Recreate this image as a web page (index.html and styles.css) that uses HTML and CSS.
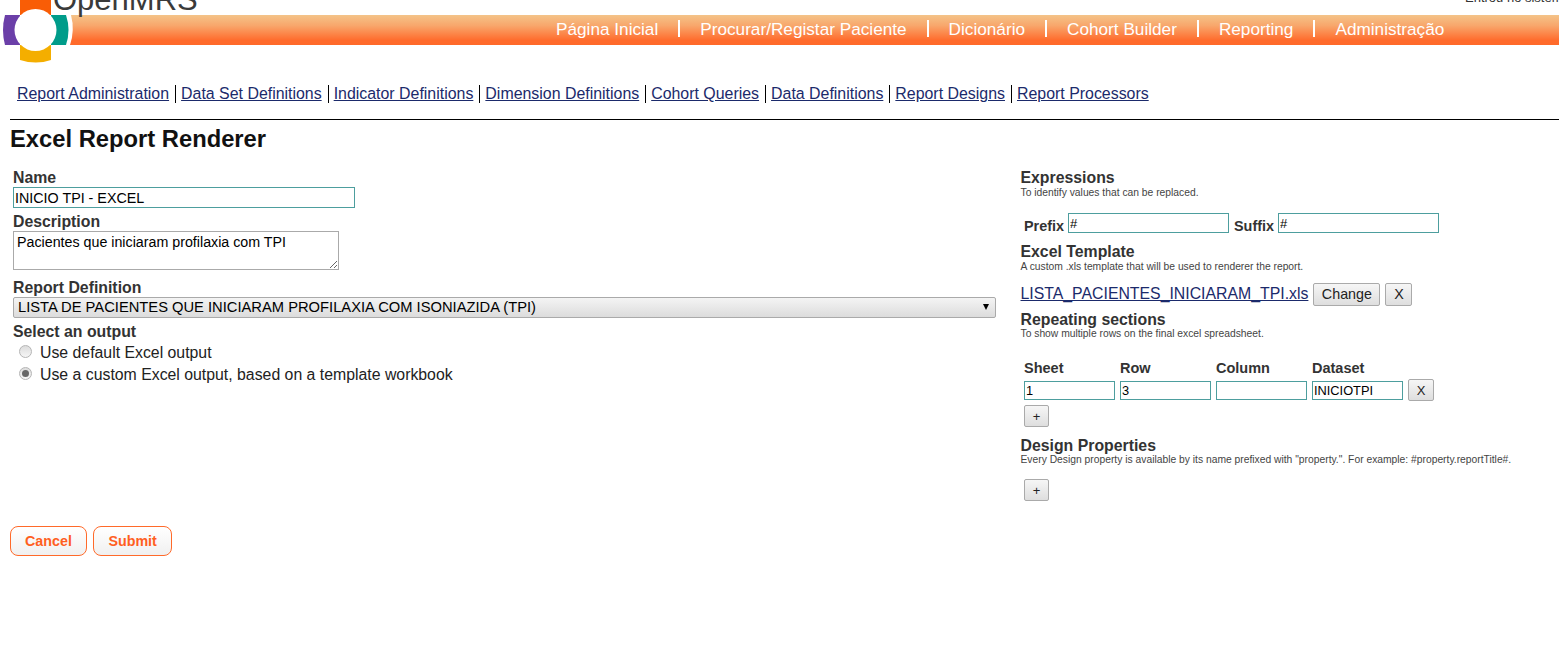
FILE: index.html
```html
<!DOCTYPE html>
<html lang="pt">
<head>
<meta charset="utf-8">
<title>Excel Report Renderer</title>
<link rel="stylesheet" href="styles.css">
</head>
<body>
<header class="top">
  <div class="userline">Entrou no sistema</div>
  <nav class="banner">
    <a>Página Inicial</a><a>Procurar/Registar Paciente</a><a>Dicionário</a><a>Cohort Builder</a><a>Reporting</a><a>Administração</a>
  </nav>
  <div class="brand">OpenMRS</div>
  <svg class="logo" width="80" height="70" viewBox="0 0 80 70" aria-hidden="true">
    <path d="M0 15H71Q75 30 70 45H0Z" fill="#fff"/>
    <path d="M20 0H51V15H20Z" fill="#f95d06"/>
    <path d="M20 45H51V60Q36 65 20 60Z" fill="#f4ae00"/>
    <path d="M5 15H20V45H5Q1 30 5 15Z" fill="#6b3fa8"/>
    <path d="M51 15H66Q71 30 66 45H51Z" fill="#009c8a"/>
    <circle cx="35.5" cy="30" r="21" fill="#fff"/>
  </svg>
</header>

<nav class="subnav">
  <a href="#">Report Administration</a><a href="#">Data Set Definitions</a><a href="#">Indicator Definitions</a><a href="#">Dimension Definitions</a><a href="#">Cohort Queries</a><a href="#">Data Definitions</a><a href="#">Report Designs</a><a href="#">Report Processors</a>
</nav>

<main class="content">
  <h1>Excel Report Renderer</h1>
  <div class="columns">
    <section class="left">
      <label class="lab">Name</label>
      <input class="field name-field" value="INICIO TPI - EXCEL">
      <label class="lab lab-desc">Description</label>
      <textarea class="desc">Pacientes que iniciaram profilaxia com TPI</textarea>
      <label class="lab lab-def">Report Definition</label>
      <div class="select"><span>LISTA DE PACIENTES QUE INICIARAM PROFILAXIA COM ISONIAZIDA (TPI)</span><i class="arrow"></i></div>
      <label class="lab lab-out">Select an output</label>
      <div class="radio-row"><span class="radio"></span>Use default Excel output</div>
      <div class="radio-row"><span class="radio on"></span>Use a custom Excel output, based on a template workbook</div>
    </section>

    <section class="right">
      <div class="head">Expressions</div>
      <div class="hint">To identify values that can be replaced.</div>
      <div class="affix">
        <b>Prefix</b><input class="field small wide" value="#">
        <b>Suffix</b><input class="field small wide" value="#">
      </div>
      <div class="head h-template">Excel Template</div>
      <div class="hint">A custom .xls template that will be used to renderer the report.</div>
      <div class="template">
        <a href="#">LISTA_PACIENTES_INICIARAM_TPI.xls</a>
        <button class="btn btn-change">Change</button>
        <button class="btn btn-x">X</button>
      </div>
      <div class="head h-repeat">Repeating sections</div>
      <div class="hint">To show multiple rows on the final excel spreadsheet.</div>
      <div class="grid">
        <b>Sheet</b><b>Row</b><b>Column</b><b>Dataset</b><span></span>
        <input class="field small" value="1"><input class="field small" value="3"><input class="field small" value=""><input class="field small" value="INICIOTPI"><button class="btn sm">X</button>
      </div>
      <button class="btn sm plus plus-a">+</button>
      <div class="head h-design">Design Properties</div>
      <div class="hint">Every Design property is available by its name prefixed with "property.". For example: #property.reportTitle#.</div>
      <button class="btn sm plus plus-b">+</button>
    </section>
  </div>
  <div class="actions">
    <button class="act">Cancel</button>
    <button class="act">Submit</button>
  </div>
</main>
</body>
</html>
```

FILE: styles.css
```css
* { box-sizing: border-box; }
html, body { height: 100%; }
body {
  margin: 0;
  background: #fff;
  color: #000;
  font-family: "Liberation Sans", Arial, sans-serif;
  font-size: 15.84px;
  overflow: hidden;
}
a { color: #1b2a6b; }

.top { position: relative; height: 45px; padding-top: 15px; }
.userline {
  position: absolute; right: -1px; top: -10px;
  font-size: 13px; line-height: 15px; color: #333; white-space: nowrap;
  width: 95px; overflow: hidden;
}
.banner {
  height: 30px;
  background: linear-gradient(#f4c388 0%, #f8a76c 35%, #ff6b2c 85%, #ff6a2a 100%);
  display: flex;
  padding: 5px 0 0 536px;
  font-size: 17.2px;
  line-height: 20px;
}
.banner a { color: #fff; padding: 0 20px; border-left: 2px solid #fff; height: 17px; line-height: 19px; }
.banner a:first-child { border-left: 0; }
.brand {
  position: absolute; left: 53px; top: -16px;
  font-size: 31px; line-height: 31px; color: #3a3a3a;
}
.logo { position: absolute; left: 0; top: 0; }

.subnav {
  display: flex;
  margin: 40px 0 0 11px;
  height: 18px;
  line-height: 18px;
  font-size: 15.92px;
}
.subnav a { padding: 0 6px 0 5px; border-left: 1px solid #000; }
.subnav a:first-child { border-left: 0; padding-left: 6px; }

.content { margin: 16px 0 0 10px; border-top: 1px solid #000; }
h1 { margin: 5px 0 0; font-size: 23.76px; line-height: 27px; color: #111; }
.columns { display: flex; margin-top: 16px; height: 340px; }
.left { width: 1003px; padding-left: 3px; display: flex; flex-direction: column; align-items: flex-start; }
.right { flex: 1; padding-left: 7.5px; }

.lab { font-weight: bold; color: #333; line-height: 20px; height: 18px; }
.field {
  border: 1px solid #4d9e9e;
  background: #fff;
  font: 14.3px "Liberation Sans", Arial, sans-serif;
  color: #000;
  padding: 0 1px;
  outline: 0;
}
.name-field { width: 342px; height: 21px; margin-top: 1px; }
.lab-desc { margin-top: 4px; }
.desc {
  width: 326px; height: 39px; margin: 1px 0 0;
  border: 1px solid #aaa;
  padding: 2px 3px;
  font: 14.25px/17px "Liberation Sans", Arial, sans-serif;
  color: #000;
}
.lab-def { margin-top: 8px; }
.select {
  width: 983px; height: 21px; margin-top: 1px;
  border: 1px solid #aaa; border-radius: 2px;
  background: linear-gradient(#f4f4f4, #dcdcdc);
  display: flex; align-items: center; justify-content: space-between;
  padding: 0 6px 2px 4px;
  font-size: 14.73px;
}
.arrow { width: 0; height: 0; border: 3.5px solid transparent; border-top: 6px solid #000; border-bottom: 0; }
.lab-out { margin-top: 4px; }
.lab-out + .radio-row { margin-top: 2px; }
.radio-row { display: flex; align-items: center; height: 22px; color: #222; line-height: 18px; padding-left: 6px; }
.radio {
  width: 13px; height: 13px; border-radius: 50%; margin-right: 8px;
  border: 1px solid #b5b5b5;
  background: linear-gradient(#dcdcdc, #f6f6f6);
  position: relative; top: -2px;
}
.radio.on::after {
  content: ""; position: absolute; left: 2px; top: 2px;
  width: 7px; height: 7px; border-radius: 50%; background: #666;
}

.head { font-weight: bold; color: #333; line-height: 20px; height: 19px; }
.hint { font-size: 10.3px; line-height: 12px; height: 12px; color: #444; white-space: nowrap; }
.affix { display: flex; align-items: flex-end; margin-top: 13px; padding-left: 3.5px; height: 21px; }
.affix b { color: #333; font-size: 14.4px; line-height: 17px; padding-right: 4px; margin-bottom: -2px; }
.affix b + input + b { margin-left: 5px; }
.small { height: 20px; font-size: 13px; }
.wide { width: 161px; }
.h-template { margin-top: 9px; }
.template { display: flex; align-items: center; height: 24px; margin-top: 9px; }
.template a { margin-right: 5px; }
.btn {
  height: 23px; padding: 0;
  border: 1px solid #aaa; border-radius: 2px;
  background: linear-gradient(#f6f6f6, #dedede);
  font: 14.3px "Liberation Sans", Arial, sans-serif;
  color: #222;
}
.btn-change { width: 67px; }
.btn-x { width: 27px; margin-left: 5px; }
.h-repeat { margin-top: 4px; height: 18px; }
.grid {
  display: grid;
  grid-template-columns: 91px 91px 91px 91px 26px;
  column-gap: 5px;
  margin: 19px 0 0 3.5px;
  width: max-content;
  align-items: center;
}
.grid b { font-size: 14.5px; color: #333; line-height: 18px; height: 20px; }
.grid input { width: 91px; height: 19px; font-size: 12.8px; }
.sm { height: 22px; width: 26px; font-size: 13px; }
.plus { display: block; margin-left: 3.5px; width: 25px; }
.plus-a { margin-top: 4px; }
.h-design { margin-top: 9px; height: 18px; }
.plus-b { margin-top: 13px; }

.actions { display: flex; gap: 6px; margin-top: 18px; }
.act {
  height: 30px; padding: 0 14px;
  border: 1px solid #ff6a2a; border-radius: 8px;
  background: linear-gradient(#fff, #f0f0f0);
  color: #ff5f1f; font: bold 14.3px "Liberation Sans", Arial, sans-serif;
}
.act + .act { padding: 0 14.5px; }
```
